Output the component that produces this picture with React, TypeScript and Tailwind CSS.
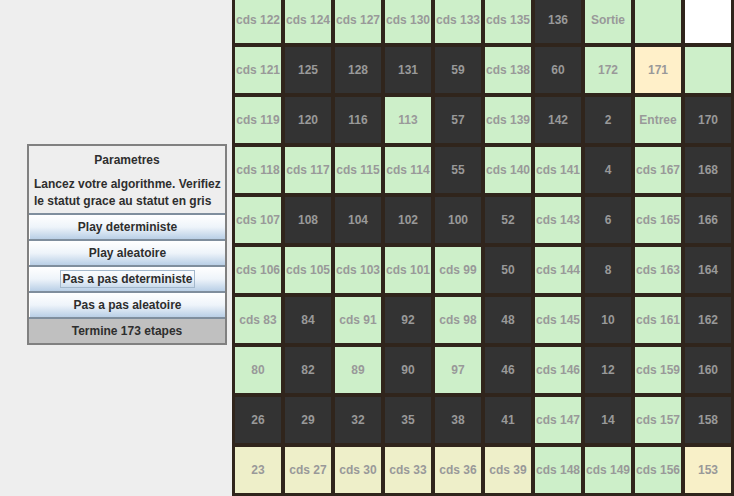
import React from 'react'

type Cell = [string, 'G' | 'D' | 'C' | 'Y' | 'P' | 'W']

const rows: Cell[][] = [
  [['cds 122', 'G'], ['cds 124', 'G'], ['cds 127', 'G'], ['cds 130', 'G'], ['cds 133', 'G'], ['cds 135', 'G'], ['136', 'D'], ['Sortie', 'G'], ['', 'G'], ['', 'W']],
  [['cds 121', 'G'], ['125', 'D'], ['128', 'D'], ['131', 'D'], ['59', 'D'], ['cds 138', 'G'], ['60', 'D'], ['172', 'G'], ['171', 'C'], ['', 'G']],
  [['cds 119', 'G'], ['120', 'D'], ['116', 'D'], ['113', 'G'], ['57', 'D'], ['cds 139', 'G'], ['142', 'D'], ['2', 'D'], ['Entree', 'G'], ['170', 'D']],
  [['cds 118', 'G'], ['cds 117', 'G'], ['cds 115', 'G'], ['cds 114', 'G'], ['55', 'D'], ['cds 140', 'G'], ['cds 141', 'G'], ['4', 'D'], ['cds 167', 'G'], ['168', 'D']],
  [['cds 107', 'G'], ['108', 'D'], ['104', 'D'], ['102', 'D'], ['100', 'D'], ['52', 'D'], ['cds 143', 'G'], ['6', 'D'], ['cds 165', 'G'], ['166', 'D']],
  [['cds 106', 'G'], ['cds 105', 'G'], ['cds 103', 'G'], ['cds 101', 'G'], ['cds 99', 'G'], ['50', 'D'], ['cds 144', 'G'], ['8', 'D'], ['cds 163', 'G'], ['164', 'D']],
  [['cds 83', 'G'], ['84', 'D'], ['cds 91', 'G'], ['92', 'D'], ['cds 98', 'G'], ['48', 'D'], ['cds 145', 'G'], ['10', 'D'], ['cds 161', 'G'], ['162', 'D']],
  [['80', 'G'], ['82', 'D'], ['89', 'G'], ['90', 'D'], ['97', 'G'], ['46', 'D'], ['cds 146', 'G'], ['12', 'D'], ['cds 159', 'G'], ['160', 'D']],
  [['26', 'D'], ['29', 'D'], ['32', 'D'], ['35', 'D'], ['38', 'D'], ['41', 'D'], ['cds 147', 'G'], ['14', 'D'], ['cds 157', 'G'], ['158', 'D']],
  [['23', 'Y'], ['cds 27', 'Y'], ['cds 30', 'Y'], ['cds 33', 'Y'], ['cds 36', 'Y'], ['cds 39', 'Y'], ['cds 148', 'G'], ['cds 149', 'G'], ['cds 156', 'G'], ['153', 'P']],
]

const bg = {
  G: 'bg-[#cdefc9]',
  D: 'bg-[#333333]',
  C: 'bg-[#fff0c9]',
  Y: 'bg-[#eeefc9]',
  P: 'bg-[#f8f0c8]',
  W: 'bg-white',
}

function Button({ label, focused }: { label: string; focused?: boolean }) {
  return (
    <div className="h-[24px] flex items-center justify-center bg-gradient-to-b from-white via-[#eef4fa] to-[#b9cfe6] border-l border-white">
      {focused ? (
        <span className="border border-[#a3b8cc] px-[1px] leading-[16px]">{label}</span>
      ) : (
        <span>{label}</span>
      )}
    </div>
  )
}

export default function App() {
  return (
    <div
      className="flex w-[734px] h-[496px] overflow-hidden text-[12px] font-bold"
      style={{ fontFamily: '"Liberation Sans", Arial, sans-serif' }}
    >
      {/* control panel */}
      <div className="w-[232px] h-full bg-[#eeeeee] pl-[27px] pt-[144px]">
        <div className="w-[200px] border-2 border-[#808080] bg-[#eeeeee] text-[#2e2e2e]">
          <div className="pt-[7px] pb-[3px]">
            <div className="text-center leading-[15px]">Parametres</div>
            <p className="mt-[8px] pl-[5px] leading-[17px]">
              Lancez votre algorithme. Verifiez le statut grace au statut en gris
            </p>
          </div>
          <div className="flex flex-col gap-[2px] bg-[#7f8e9d] pt-[2px]">
            <Button label="Play deterministe" />
            <Button label="Play aleatoire" />
            <Button label="Pas a pas deterministe" focused />
            <Button label="Pas a pas aleatoire" />
            <div className="h-[24px] flex items-center justify-center bg-[#c0c0c0]">
              Termine 173 etapes
            </div>
          </div>
        </div>
      </div>

      {/* maze grid */}
      <div className="w-[502px] h-full bg-[#30251c] overflow-hidden">
        <div className="-mt-[3px] pl-[3px] grid grid-cols-[repeat(10,46px)] auto-rows-[46px] gap-[4px]">
          {rows.flat().map(([label, kind], i) => (
            <div
              key={i}
              className={`${bg[kind]} flex items-center justify-center text-[#999999] whitespace-nowrap`}
            >
              {label}
            </div>
          ))}
        </div>
      </div>
    </div>
  )
}
